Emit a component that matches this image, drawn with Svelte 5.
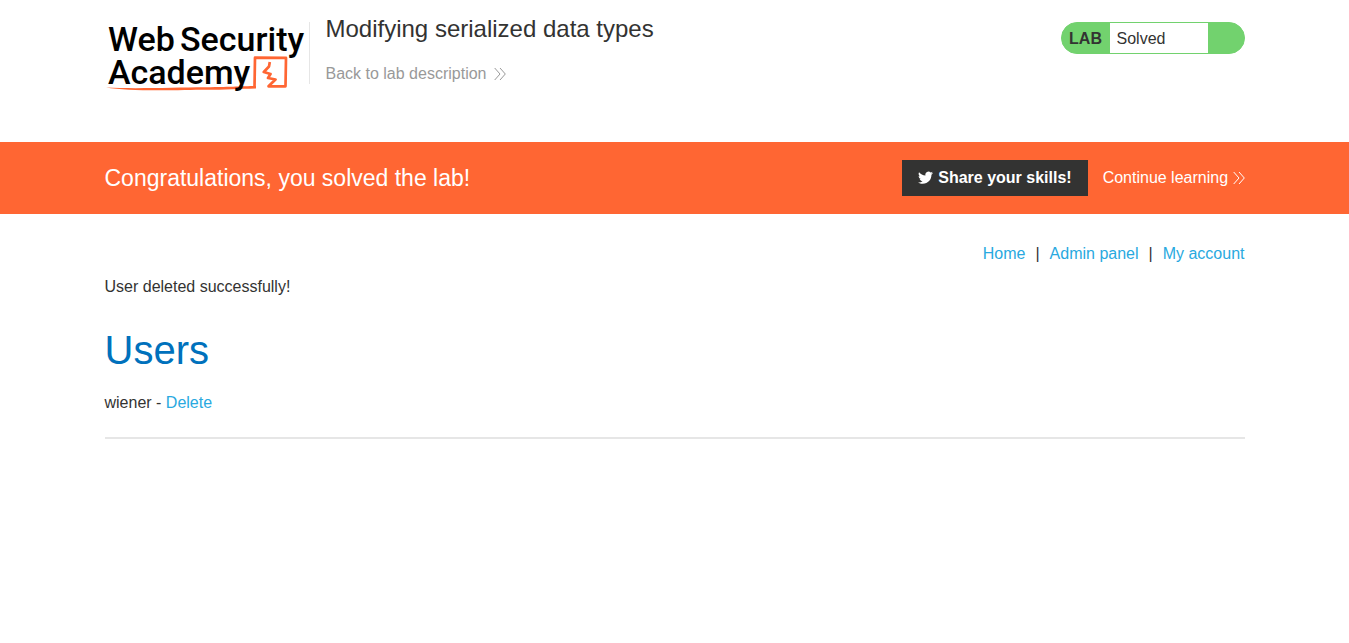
<script>
  const links = ['Home', 'Admin panel', 'My account'];
  const users = ['wiener'];
</script>

{#snippet chevrons()}
  <svg class="chevrons" width="12" height="14" viewBox="0 0 12 14" aria-hidden="true">
    <path d="M.7 1 6 7 .7 13M6 1l5.300 6L6 13" fill="none" stroke="currentColor" />
  </svg>
{/snippet}

<header>
  <div class="container top">
    <a class="logo" href="#academy" aria-label="Web Security Academy">
      <svg width="200" height="72" viewBox="0 0 200 72">
        <path d="M1 65.600C30 67 70 65.500 100 65.300S135 64.300 151 64.100V66.500C135 66.800 120 67.800 100 67.800S25 70 1 65.600Z" fill="#ff6633" />
        <path d="M149.500 65.400 150 35.700 181 35.900 180.500 64.300H163.500L170.500 57.500 163 56 165.500 52 158.800 50 164 44.500 164.800 40" fill="none" stroke="#ff6633" stroke-width="2.700" stroke-linejoin="round" />
        <g class="wordmark">
          <text x="3" y="29">Web</text>
          <text x="75" y="29">Security</text>
          <text x="3" y="62">Academy</text>
        </g>
      </svg>
    </a>
    <div class="title">
      <h2>Modifying serialized data types</h2>
      <a class="back" href="#description">Back to lab description {@render chevrons()}</a>
    </div>
    <div class="status"><strong>LAB</strong><span>Solved</span></div>
  </div>
</header>

<section class="banner">
  <div class="container solved">
    <h4>Congratulations, you solved the lab!</h4>
    <button type="button">
      <svg width="15" height="14" viewBox="0 0 24 21" aria-hidden="true">
        <path d="M23.950 2.500c-.9.400-1.800.700-2.800.8 1-.6 1.800-1.600 2.200-2.700-1 .6-2 1-3.100 1.200A4.920 4.920 0 0 0 11.900 6.300C7.700 6.100 4.100 4.100 1.700 1.100c-1.300 2.200-.7 5.100 1.500 6.600-.8 0-1.600-.2-2.200-.6v.1c0 2.300 1.600 4.400 3.900 4.800-.7.200-1.500.200-2.200.1.600 2 2.400 3.400 4.600 3.400A9.870 9.870 0 0 1 0 17.500c2.200 1.400 4.800 2.200 7.500 2.200 9.100 0 14.300-7.700 14-14.600.9-.7 1.800-1.600 2.450-2.600z" fill="currentColor" />
      </svg>
      Share your skills!
    </button>
    <a class="continue" href="#learning">Continue learning {@render chevrons()}</a>
  </div>
</section>

<main class="container">
  <nav>
    {#each links as link, i}
      {#if i > 0}<span>|</span>{/if}
      <a href="#{link.toLowerCase().replace(' ', '-')}">{link}</a>
    {/each}
  </nav>
  <p>User deleted successfully!</p>
  <h1>Users</h1>
  {#each users as user}
    <div class="user">{user} - <a href="#delete-{user}">Delete</a></div>
  {/each}
  <hr />
</main>

<style>
  :global(body) {
    margin: 0;
    background: #fff;
    color: #333332;
    font: 16px/24px "Liberation Sans", Arial, sans-serif;
  }

  .container {
    box-sizing: border-box;
    max-width: 1140px;
    margin: 0 auto;
  }

  a {
    color: #29a9e0;
    text-decoration: none;
  }

  h1, h2, h4, p {
    margin: 0;
    font-weight: 400;
  }

  .chevrons {
    vertical-align: -2px;
  }

  .top {
    display: flex;
    align-items: flex-start;
    padding-bottom: 48px;
  }

  .logo {
    padding-top: 22px;
  }

  .logo svg {
    display: block;
    overflow: visible;
  }

  .wordmark {
    fill: #000;
    font: 500 34px Roboto, sans-serif;
  }

  .title {
    flex: 1;
    margin: 22px 0 0 4px;
    height: 62px;
    padding-left: 16px;
    border-left: 1px solid #e6e6e6;
  }

  h2 {
    margin: -8px 0 18px;
    font-size: 24px;
    line-height: 30px;
  }

  .back {
    display: inline-flex;
    align-items: center;
    gap: 8px;
    color: #999;
  }

  .status {
    display: flex;
    margin-top: 22px;
    box-sizing: border-box;
    width: 184px;
    height: 32px;
    border: 1px solid #72d26e;
    border-radius: 16px;
    background: #72d26e;
    line-height: 32px;
  }

  .status strong {
    width: 48px;
    text-align: center;
  }

  .status span {
    box-sizing: border-box;
    width: 98px;
    padding-left: 7px;
    background: #fff;
  }

  .banner {
    background: #ff6633;
    color: #fff;
  }

  .solved {
    display: flex;
    align-items: center;
    min-height: 72px;
  }

  h4 {
    flex: 1;
    font-size: 23px;
    line-height: 36px;
  }

  button {
    display: flex;
    align-items: center;
    gap: 5px;
    height: 36px;
    margin: 0 15px 0 0;
    padding: 0 16px;
    border: 0;
    background: #333332;
    color: #fff;
    font: inherit;
    font-weight: 700;
  }

  .continue {
    color: #fff;
  }

  nav {
    display: flex;
    justify-content: flex-end;
    gap: 10px;
    padding-top: 28px;
  }

  p {
    margin-top: 9px;
  }

  h1 {
    margin: 27px 0 17px;
    color: #0071bc;
    font-size: 40px;
    line-height: 48px;
  }

  hr {
    height: 2px;
    margin: 22px 0 0;
    border: 0;
    background: #e6e6e6;
  }
</style>
